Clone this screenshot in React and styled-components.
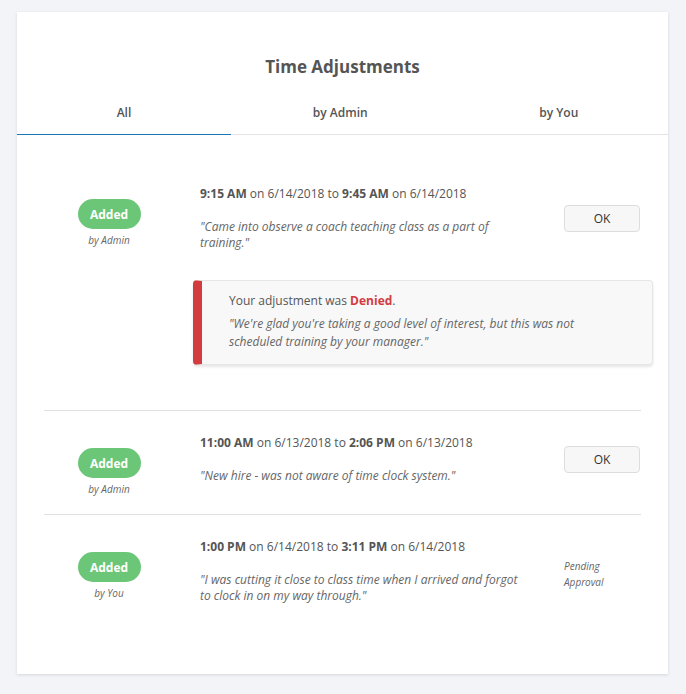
import styled, { createGlobalStyle } from "styled-components"

const GlobalStyle = createGlobalStyle`
    html, body {
        margin: 0;
        padding: 0;
        background: #f3f4f8;
        font-family: "Open Sans", "Noto Sans", sans-serif;
        color: #555;
    }
    * { box-sizing: border-box; }
`

const adjustments = [
    {
        from: "9:15 AM", fromDate: "6/14/2018", to: "9:45 AM", toDate: "6/14/2018",
        by: "Admin",
        note: "\"Came into observe a coach teaching class as a part of training.\"",
        status: "ok",
        denied: "\"We're glad you're taking a good level of interest, but this was not scheduled training by your manager.\"",
    },
    {
        from: "11:00 AM", fromDate: "6/13/2018", to: "2:06 PM", toDate: "6/13/2018",
        by: "Admin",
        note: "\"New hire - was not aware of time clock system.\"",
        status: "ok",
    },
    {
        from: "1:00 PM", fromDate: "6/14/2018", to: "3:11 PM", toDate: "6/14/2018",
        by: "You",
        note: "\"I was cutting it close to class time when I arrived and forgot to clock in on my way through.\"",
        status: "pending",
    },
]

export default function App() {
    const tabs = ["All", "by Admin", "by You"]

    return (
        <>
            <GlobalStyle />
            <Page>
                <Card>
                    <Title>Time Adjustments</Title>
                    <Tabs>
                        {tabs.map((t, i) => <Tab key={t} active={i === 0}>{t}</Tab>)}
                    </Tabs>
                    <List>
                        {adjustments.map((a, index) => (
                            <Row key={index}>
                                <Main>
                                    <Who>
                                        <Badge>Added</Badge>
                                        <By>by {a.by}</By>
                                    </Who>
                                    <Content>
                                        <Details>
                                            <Times>
                                                <b>{a.from}</b> on {a.fromDate} to <b>{a.to}</b> on {a.toDate}
                                            </Times>
                                            <Note>{a.note}</Note>
                                        </Details>
                                        <Action>
                                            {a.status === "ok"
                                                ? <OkButton>OK</OkButton>
                                                : <Pending>Pending Approval</Pending>}
                                        </Action>
                                    </Content>
                                </Main>
                                {a.denied && (
                                    <Alert>
                                        <p>Your adjustment was <Denied>Denied</Denied>.</p>
                                        <AlertNote>{a.denied}</AlertNote>
                                    </Alert>
                                )}
                            </Row>
                        ))}
                    </List>
                </Card>
            </Page>
        </>
    )
}

const Page = styled.div`
    padding: 12px 18px 21px 17px;
    min-height: 694px;
`

const Card = styled.div`
    background: #fff;
    box-shadow: 0 1px 3px rgba(0, 0, 0, 0.12);
    padding-top: 44px;
    padding-bottom: 52px;
`

const Title = styled.h1`
    margin: 0;
    text-align: center;
    font-size: 17px;
    line-height: 22px;
    font-weight: 700;
    color: #555;
`

const Tabs = styled.div`
    display: grid;
    grid-template-columns: 214px 1fr 1fr;
    margin-top: 27px;
    border-bottom: 1px solid #e4e4e4;
`

const Tab = styled.div`
    text-align: center;
    font-size: 12px;
    line-height: 16px;
    font-weight: 600;
    color: #555;
    padding-bottom: 13px;
    margin-bottom: -1px;
    border-bottom: 1px solid ${p => p.active ? "#1a7ab8" : "transparent"};
`

const List = styled.div`
    padding: 27px 27px 0 27px;
`

const Row = styled.div`
    padding: 24px 0 18px;
    border-bottom: 1px solid #e2e2e2;
    &:first-child { padding-bottom: 45px; }
    &:last-child { border-bottom: none; }
`

const Main = styled.div`
    display: flex;
    align-items: flex-start;
`

const Who = styled.div`
    width: 130px;
    flex-shrink: 0;
    display: flex;
    flex-direction: column;
    align-items: center;
    padding-top: 13px;
`

const Content = styled.div`
    flex: 1;
    display: flex;
    align-items: center;
    margin-left: 26px;
`

const Badge = styled.div`
    width: 63px;
    height: 30px;
    border-radius: 15px;
    background: #6cc677;
    color: #fff;
    font-size: 12px;
    font-weight: 700;
    display: flex;
    align-items: center;
    justify-content: center;
`

const By = styled.div`
    margin-top: 4px;
    font-size: 10px;
    line-height: 14px;
    font-style: italic;
    color: #666;
`

const Details = styled.div`
    width: 330px;
    font-size: 12px;
    line-height: 16px;
`

const Times = styled.div`
    color: #555;
    b { font-weight: 700; }
`

const Note = styled.div`
    margin-top: 17px;
    font-style: italic;
    color: #666;
`

const Action = styled.div`
    margin-left: auto;
    width: 77px;
`

const OkButton = styled.button`
    width: 76px;
    height: 27px;
    border: 1px solid #ddd;
    border-radius: 4px;
    background: #f7f7f7;
    color: #333;
    font-family: "Open Sans", sans-serif;
    font-size: 12px;
    font-weight: 400;
`

const Pending = styled.div`
    font-size: 10px;
    line-height: 16px;
    font-style: italic;
    color: #666;
    width: 50px;
    padding-top: 4px;
`

const Alert = styled.div`
    margin: 29px -12px 0 149px;
    background: #f8f8f8;
    border: 1px solid #e6e6e6;
    border-left: 9px solid #d23c3f;
    border-radius: 4px;
    box-shadow: 0 2px 3px rgba(0, 0, 0, 0.1);
    padding: 11px 50px 13px 27px;
    font-size: 12px;
    line-height: 18px;
    color: #555;
    p { margin: 0; }
`

const Denied = styled.span`
    color: #d23c3f;
    font-weight: 700;
`

const AlertNote = styled.div`
    margin-top: 5px;
    font-style: italic;
    color: #666;
`
